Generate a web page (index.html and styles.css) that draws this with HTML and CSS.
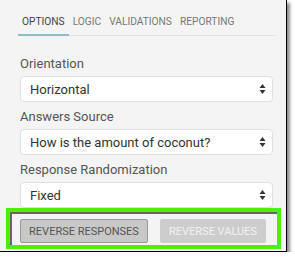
FILE: index.html
```html
<!DOCTYPE HTML>
<html>
<head>
  <meta http-equiv="Content-Type" content="text/html; charset=UTF-8">
  <title>Question Settings</title>
  <link rel="stylesheet" href="styles.css">
</head>
<body>
  <div class="panel">
    <div class="tabs">
      <span class="tab active">Options</span>
      <span class="tab">Logic</span>
      <span class="tab">Validations</span>
      <span class="tab">Reporting</span>
    </div>

    <div class="field">
      <label>Orientation</label>
      <div class="select">
        <span>Horizontal</span>
        <svg class="arrows" width="7" height="12" viewBox="0 0 7 12"><path d="M3.5 1 L6.5 5 L0.5 5 Z M3.5 11 L6.5 7 L0.5 7 Z" fill="#333"/></svg>
      </div>
    </div>

    <div class="field">
      <label>Answers Source</label>
      <div class="select">
        <span>How is the amount of coconut?</span>
        <svg class="arrows" width="7" height="12" viewBox="0 0 7 12"><path d="M3.5 1 L6.5 5 L0.5 5 Z M3.5 11 L6.5 7 L0.5 7 Z" fill="#333"/></svg>
      </div>
    </div>

    <div class="field">
      <label>Response Randomization</label>
      <div class="select">
        <span>Fixed</span>
        <svg class="arrows" width="7" height="12" viewBox="0 0 7 12"><path d="M3.5 1 L6.5 5 L0.5 5 Z M3.5 11 L6.5 7 L0.5 7 Z" fill="#333"/></svg>
      </div>
    </div>

    <div class="actions">
      <button class="btn">Reverse Responses</button>
      <button class="btn disabled">Reverse Values</button>
    </div>
  </div>
</body>
</html>
```

FILE: styles.css
```css
body, html {
    background-color: #fff;
    padding: 0;
    margin: 0;
    font-family: Roboto, "Liberation Sans", sans-serif;
}

.panel {
    width: 287px;
    height: 252px;
    box-sizing: border-box;
    background-color: #f4f4f4;
    border-right: 1px solid #000;
    border-bottom: 1px solid #000;
    box-shadow: 3px 3px 3px rgba(0, 0, 0, 0.45);
    padding: 16px 0 0 20px;
}

.tabs {
    display: flex;
    width: 257px;
    margin-left: -2px;
    border-bottom: 1px solid #e2e2e2;
}

.tab {
    font-size: 10.2px;
    text-transform: uppercase;
    color: #777;
    padding: 0 4px 9px 4px;
    margin-bottom: -1px;
}

.tab.active {
    color: #444;
    border-bottom: 2px solid #8cbdcc;
    padding-bottom: 7px;
}

.field {
    margin-top: 7px;
}

.tabs + .field {
    margin-top: 20px;
}

.field label {
    display: block;
    font-size: 13px;
    color: #555;
}

.select {
    display: flex;
    align-items: center;
    justify-content: space-between;
    width: 253px;
    height: 26px;
    box-sizing: border-box;
    margin-top: 5px;
    padding: 0 6px 0 9px;
    background-color: #fff;
    border: 1px solid #e0e0e0;
    border-radius: 4px;
    font-size: 13px;
    color: #333;
}

.actions {
    display: flex;
    gap: 12px;
    width: 275px;
    margin-left: -14px;
    box-sizing: border-box;
    border: 4px solid #4cf000;
    box-shadow: inset 2px 2px 0 #666;
    padding: 7px 0 2px 10px;
}

.btn {
    font-family: Roboto, "Liberation Sans", sans-serif;
    font-size: 11px;
    text-transform: uppercase;
    color: #555;
    background-color: #c8c8c8;
    border: 1px solid #999;
    border-radius: 2px;
    height: 24px;
    width: 128px;
    padding: 0;
}

.btn.disabled {
    width: 106px;
    color: #f2f2f2;
    background-color: #cdcdcd;
    border-color: #cdcdcd;
}
```
